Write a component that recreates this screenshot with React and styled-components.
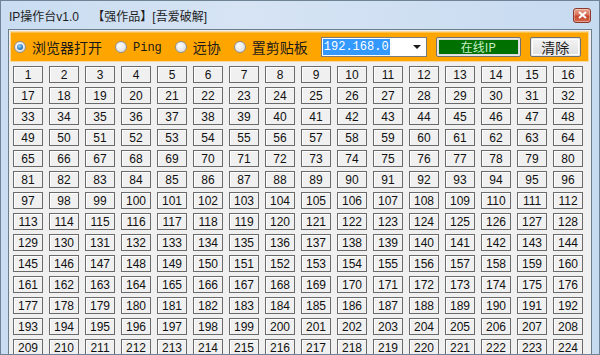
import React from "react";
import styled, { createGlobalStyle } from "styled-components";

const Global = createGlobalStyle`
  html, body { margin: 0; padding: 0; }
  body { width: 600px; height: 355px; overflow: hidden; background: #fff; }
`;

const Window = styled.div`
  width: 600px;
  height: 355px;
  box-sizing: border-box;
  background: linear-gradient(90deg, #c9dcf1 0%, #d6e4f4 40%, #cfdff2 70%, #c6daf0 100%);
  border: 1px solid #6f8396;
  display: flex;
  flex-direction: column;
  font-family: "Liberation Sans", "Noto Sans CJK SC", sans-serif;
  overflow: hidden;
`;

const TitleBar = styled.div`
  height: 28px;
  flex: none;
  display: flex;
  align-items: center;
  padding: 0 6px 0 8px;
  box-sizing: border-box;
`;

const Title = styled.div`
  flex: 1;
  font-size: 12px;
  color: #1e1e1e;
  font-family: "Liberation Sans", "Noto Sans CJK SC", sans-serif;
  white-space: pre;
  padding-top: 1px;
`;

const Close = styled.div`
  width: 18px;
  height: 15px;
  box-sizing: border-box;
  border: 1px solid #8d3a2c;
  border-radius: 3px;
  background: linear-gradient(180deg, #e9a58f 0%, #d9715a 45%, #c5442a 55%, #d46b4f 100%);
  display: flex;
  align-items: center;
  justify-content: center;
  margin-right: 2px;
  box-shadow: inset 0 0 0 1px rgba(255,255,255,0.35);
`;

const Client = styled.div`
  flex: 1;
  margin: 0 7px 0 7px;
  border: 1px solid #6d7d8c;
  border-bottom: none;
  background: #f0f0f0;
  display: flex;
  flex-direction: column;
  padding: 1px 2px 0 1px;
  box-sizing: border-box;
  overflow: hidden;
`;

const Toolbar = styled.div`
  height: 31px;
  flex: none;
  box-sizing: border-box;
  background: #ffa500;
  border: 1px solid #f7d9a0;
  box-shadow: inset 0 1px 0 #ffc04a;
  display: flex;
  align-items: center;
  padding: 0 0 0 3px;
`;

const RadioItem = styled.label`
  display: flex;
  align-items: center;
  margin-right: ${p => p.$gap}px;
`;

const RadioDot = styled.span`
  width: 12px;
  height: 12px;
  border-radius: 50%;
  box-sizing: border-box;
  border: 1px solid #8e8f8f;
  background: radial-gradient(circle at 40% 35%, #ffffff 0%, #e6e6e6 60%, #cfcfcf 100%);
  display: flex;
  align-items: center;
  justify-content: center;
  margin-right: 6px;
  &::after {
    content: "";
    display: ${p => (p.$on ? "block" : "none")};
    width: 6px;
    height: 6px;
    border-radius: 50%;
    background: radial-gradient(circle at 40% 35%, #9fd3f7 0%, #2c7fc1 60%, #0e4e86 100%);
  }
`;

const RadioText = styled.span`
  font-family: ${p => (p.$mono ? '"Liberation Mono", monospace' : '"Noto Sans CJK SC", sans-serif')};
  font-size: ${p => (p.$mono ? "12px" : "14px")};
  padding-top: ${p => (p.$mono ? "2px" : "0")};
  color: #1a1a1a;
  line-height: 1;
`;

const Combo = styled.div`
  width: 106px;
  height: 20px;
  box-sizing: border-box;
  border: 1px solid #7a7a7a;
  background: #fff;
  display: flex;
  align-items: center;
  padding-left: 1px;
  margin-right: 9px;
`;

const Selected = styled.span`
  background: #3399ff;
  color: #fff;
  font-family: "Liberation Mono", monospace;
  font-size: 12px;
  line-height: 16px;
  padding: 0 1px;
`;

const Arrow = styled.span`
  margin-left: auto;
  margin-right: 5px;
  width: 0;
  height: 0;
  border-left: 4px solid transparent;
  border-right: 4px solid transparent;
  border-top: 4px solid #1a1a1a;
`;

const ToolButton = styled.div`
  width: ${p => p.$w}px;
  height: 20px;
  box-sizing: border-box;
  border: 1px solid #707070;
  border-radius: 2px;
  padding: 1px;
  background: #e8e8e8;
  margin-right: ${p => p.$mr}px;
  display: flex;
`;

const ToolFace = styled.div`
  flex: 1;
  background: ${p => (p.$green ? "#007000" : "linear-gradient(180deg,#f2f2f2,#e1e1e1)")};
  border: 1px solid ${p => (p.$green ? "#dcdcdc" : "#ffffff")};
  color: ${p => (p.$green ? "#c8f0c8" : "#1a1a1a")};
  font-family: "Noto Sans CJK SC", sans-serif;
  font-size: ${p => (p.$green ? "12px" : "14px")};
  display: flex;
  align-items: center;
  justify-content: center;
  line-height: 1;
`;

const Grid = styled.div`
  display: grid;
  grid-template-columns: repeat(16, 30px);
  column-gap: 6px;
  row-gap: 4px;
  padding: 4px 0 0 3px;
`;

const NumButton = styled.div`
  height: 17px;
  box-sizing: border-box;
  border: 1px solid #6a6a6a;
  background: #f0f0f0;
  box-shadow: inset 1px 1px 0 #ffffff;
  font-family: "Liberation Sans", sans-serif;
  font-size: 12px;
  color: #111;
  display: flex;
  align-items: center;
  justify-content: center;
  line-height: 1;
`;

const radios = [
  { label: "浏览器打开", on: true, gap: 13 },
  { label: "Ping", mono: true, gap: 13 },
  { label: "远协", gap: 13 },
  { label: "置剪贴板", gap: 13 },
];

export default function App() {
  const nums = Array.from({ length: 224 }, (_, i) => i + 1);
  return (
    <>
      <Global />
      <Window>
        <TitleBar>
          <Title>{"IP操作台v1.0    【强作品】[吾爱破解]"}</Title>
          <Close>
            <svg width="9" height="8" viewBox="0 0 9 8">
              <path d="M1 1 L8 7 M8 1 L1 7" stroke="#fff" strokeWidth="2" />
            </svg>
          </Close>
        </TitleBar>
        <Client>
          <Toolbar>
            {radios.map(r => (
              <RadioItem key={r.label} $gap={r.gap}>
                <RadioDot $on={r.on} />
                <RadioText $mono={r.mono}>{r.label}</RadioText>
              </RadioItem>
            ))}
            <Combo>
              <Selected>192.168.0</Selected>
              <Arrow />
            </Combo>
            <ToolButton $w={85} $mr={9}>
              <ToolFace $green>在线IP</ToolFace>
            </ToolButton>
            <ToolButton $w={51} $mr={0}>
              <ToolFace>清除</ToolFace>
            </ToolButton>
          </Toolbar>
          <Grid>
            {nums.map(n => (
              <NumButton key={n}>{n}</NumButton>
            ))}
          </Grid>
        </Client>
      </Window>
    </>
  );
}
